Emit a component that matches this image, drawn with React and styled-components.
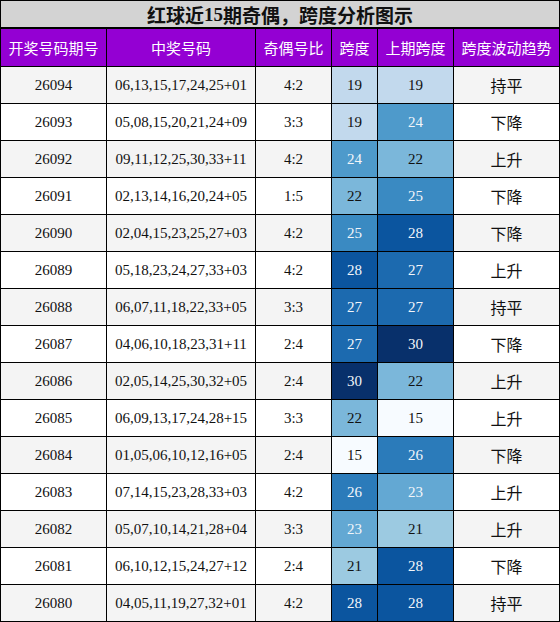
import React from "react";
import styled, { createGlobalStyle } from "styled-components";

const Global = createGlobalStyle`
  html, body { margin: 0; padding: 0; background: #fff; }
  body { font-family: "Liberation Serif", "Noto Sans CJK SC", serif; }
`;

const rows = [
  ["26094", "06,13,15,17,24,25+01", "4:2", 19, 19, "持平"],
  ["26093", "05,08,15,20,21,24+09", "3:3", 19, 24, "下降"],
  ["26092", "09,11,12,25,30,33+11", "4:2", 24, 22, "上升"],
  ["26091", "02,13,14,16,20,24+05", "1:5", 22, 25, "下降"],
  ["26090", "02,04,15,23,25,27+03", "4:2", 25, 28, "下降"],
  ["26089", "05,18,23,24,27,33+03", "4:2", 28, 27, "上升"],
  ["26088", "06,07,11,18,22,33+05", "3:3", 27, 27, "持平"],
  ["26087", "04,06,10,18,23,31+11", "2:4", 27, 30, "下降"],
  ["26086", "02,05,14,25,30,32+05", "2:4", 30, 22, "上升"],
  ["26085", "06,09,13,17,24,28+15", "3:3", 22, 15, "上升"],
  ["26084", "01,05,06,10,12,16+05", "2:4", 15, 26, "下降"],
  ["26083", "07,14,15,23,28,33+03", "4:2", 26, 23, "上升"],
  ["26082", "05,07,10,14,21,28+04", "3:3", 23, 21, "上升"],
  ["26081", "06,10,12,15,24,27+12", "2:4", 21, 28, "下降"],
  ["26080", "04,05,11,19,27,32+01", "4:2", 28, 28, "持平"],
];

const spanColors = {
  15: "#f7fbff",
  19: "#c2d9ed",
  21: "#9ccae1",
  22: "#7bb7da",
  23: "#63a8d3",
  24: "#4e9acb",
  25: "#3a8ac2",
  26: "#2b7bba",
  27: "#1c6aaf",
  28: "#0b559f",
  30: "#08306b",
};

const Table = styled.div`
  width: 558px;
  border: 1px solid #000;
  background: #000;
`;

const Title = styled.div`
  height: 26px;
  border-bottom: 2px solid #000;
  background: #d3d3d3;
  color: #111;
  font-family: "Noto Sans CJK SC", sans-serif;
  font-weight: 700;
  font-size: 19px;
  display: flex;
  align-items: center;
  justify-content: center;
  line-height: 1;
`;

const TitleNum = styled.span`
  font-family: "Liberation Serif", serif;
  font-weight: 700;
`;

const Grid = styled.div`
  display: grid;
  grid-template-columns: 105px 148px 75px 45px 75px 105px;
  grid-template-rows: 37px;
  grid-auto-rows: 36px;
  gap: 1px;
  background: #000;
`;

const Head = styled.div`
  background: #9400d3;
  color: #fff;
  font-family: "Noto Sans CJK SC", sans-serif;
  font-size: 15px;
  display: flex;
  align-items: center;
  justify-content: center;
  white-space: nowrap;
`;

const Cell = styled.div`
  background: ${(p) => p.$bg};
  color: ${(p) => p.$fg || "#111"};
  font-family: ${(p) =>
    p.$cjk ? `"Noto Sans CJK SC", sans-serif` : `"Liberation Serif", serif`};
  font-size: ${(p) => (p.$cjk ? "16px" : "15px")};
  display: flex;
  align-items: center;
  justify-content: center;
  white-space: nowrap;
`;

const SpanCell = ({ v, rowBg }) => (
  <Cell $bg={spanColors[v] || rowBg} $fg={v >= 23 ? "#f2f6fa" : "#111"}>
    {v}
  </Cell>
);

const headers = ["开奖号码期号", "中奖号码", "奇偶号比", "跨度", "上期跨度", "跨度波动趋势"];

export default function App() {
  return (
    <>
      <Global />
      <Table>
        <Title>
          红球近<TitleNum>15</TitleNum>期奇偶，跨度分析图示
        </Title>
        <Grid>
          {headers.map((h) => (
            <Head key={h}>{h}</Head>
          ))}
          {rows.map((r, i) => {
            const bg = i % 2 === 0 ? "#f4f4f4" : "#ffffff";
            return (
              <React.Fragment key={r[0]}>
                <Cell $bg={bg}>{r[0]}</Cell>
                <Cell $bg={bg}>{r[1]}</Cell>
                <Cell $bg={bg}>{r[2]}</Cell>
                <SpanCell v={r[3]} rowBg={bg} />
                <SpanCell v={r[4]} rowBg={bg} />
                <Cell $bg={bg} $cjk>
                  {r[5]}
                </Cell>
              </React.Fragment>
            );
          })}
        </Grid>
      </Table>
    </>
  );
}
